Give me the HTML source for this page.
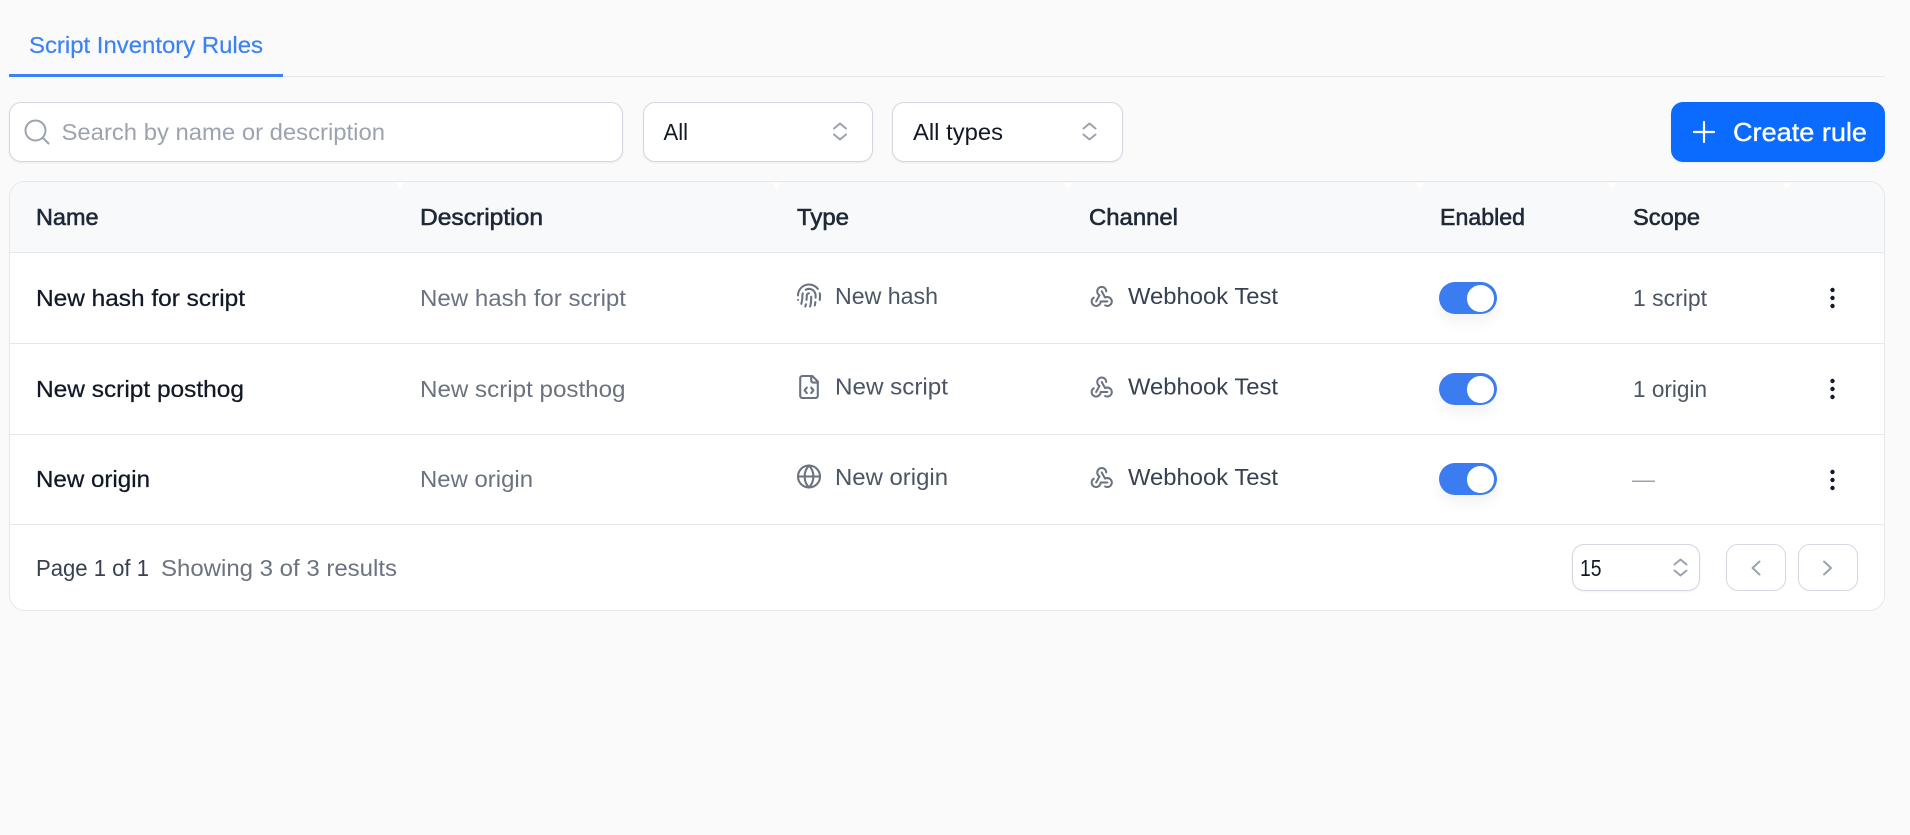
<!DOCTYPE html>
<html lang="en">
<head>
<meta charset="utf-8">
<title>Script Inventory Rules</title>
<style>
html,body{margin:0;padding:0;width:1910px;height:835px;overflow:hidden;background:#fafafa;}
.b{position:absolute;box-sizing:border-box;}
.ctl{background:#fff;border:1px solid #d5d7e0;border-radius:12px;box-shadow:0 1px 2px rgba(0,0,0,.06);}
.line{position:absolute;height:1px;background:#e5e7eb;}
svg{position:absolute;left:0;top:0;}
text{font-family:"Liberation Sans",sans-serif;font-size:23px;}
.h{fill:#1f2937;stroke:#1f2937;stroke-width:.6px;}
.n{fill:#111827;stroke:#111827;stroke-width:.25px;}
.d{fill:#6b7280;}
.t{fill:#4b5563;}
.c{fill:#374151;}
.i{fill:none;stroke:#6b7280;stroke-width:1.9;stroke-linecap:round;stroke-linejoin:round;}
.w{fill:none;stroke:#6b7280;stroke-width:1.8;stroke-linecap:round;stroke-linejoin:round;}
.g{fill:none;stroke:#9ca3af;stroke-width:2;stroke-linecap:round;stroke-linejoin:round;}
</style>
</head>
<body>
<div class="line" style="left:283px;top:76px;width:1602px;"></div>
<div class="b" style="left:9px;top:74px;width:274px;height:3px;background:#3b82f6;"></div>

<div class="b ctl" style="left:9px;top:102px;width:614px;height:60px;"></div>
<div class="b ctl" style="left:643px;top:102px;width:230px;height:60px;"></div>
<div class="b ctl" style="left:892px;top:102px;width:231px;height:60px;"></div>
<div class="b" style="left:1671px;top:102px;width:214px;height:60px;background:#0b6bff;border-radius:12px;box-shadow:0 1px 3px rgba(0,0,0,.06);"></div>

<div class="b" style="left:9px;top:181px;width:1876px;height:430px;background:#fff;border:1px solid #e5e7eb;border-radius:16px;overflow:hidden;">
  <div class="b" style="left:0;top:0;width:100%;height:71px;background:#f8f9fb;border-bottom:1px solid #e5e7eb;"></div>
  <div class="line" style="left:0;top:161px;width:100%;"></div>
  <div class="line" style="left:0;top:252px;width:100%;"></div>
  <div class="line" style="left:0;top:342px;width:100%;"></div>
</div>

<div class="b ctl" style="left:1572px;top:544px;width:128px;height:47px;"></div>
<div class="b" style="left:1726px;top:544px;width:60px;height:47px;border:1px solid #d5d7e0;border-radius:12px;background:#fff;"></div>
<div class="b" style="left:1798px;top:544px;width:60px;height:47px;border:1px solid #d5d7e0;border-radius:12px;background:#fff;"></div>

<div class="b" style="left:1439px;top:282px;width:58px;height:32px;border-radius:16px;background:#3b7cf0;box-shadow:0 8px 14px rgba(0,0,0,.05);"></div>
<div class="b" style="left:1439px;top:373px;width:58px;height:32px;border-radius:16px;background:#3b7cf0;box-shadow:0 8px 14px rgba(0,0,0,.05);"></div>
<div class="b" style="left:1439px;top:463px;width:58px;height:32px;border-radius:16px;background:#3b7cf0;box-shadow:0 8px 14px rgba(0,0,0,.05);"></div>
<div class="b" style="left:1467px;top:285px;width:27px;height:26.500px;border-radius:50%;background:#fff;"></div>
<div class="b" style="left:1467px;top:376px;width:27px;height:26.500px;border-radius:50%;background:#fff;"></div>
<div class="b" style="left:1467px;top:466px;width:27px;height:26.500px;border-radius:50%;background:#fff;"></div>

<svg width="1910" height="835" viewBox="0 0 1910 835" xmlns="http://www.w3.org/2000/svg">
  <!-- header notches -->
  <g fill="#ffffff">
    <polygon points="396,183 404,183 400,189"/>
    <polygon points="773,183 781,183 777,189"/>
    <polygon points="1064,183 1072,183 1068,189"/>
    <polygon points="1416,183 1424,183 1420,189"/>
    <polygon points="1608,183 1616,183 1612,189"/>
    <polygon points="1783,183 1791,183 1787,189"/>
  </g>

  <text x="29" y="53" textLength="234" lengthAdjust="spacingAndGlyphs" fill="#3b82f6" stroke="#3b82f6" stroke-width=".2">Script Inventory Rules</text>

  <!-- search -->
  <circle cx="35.500" cy="130.500" r="10" class="g"/>
  <path d="M43 138 48.500 143.500" class="g"/>
  <text x="61.500" y="140" textLength="323.500" lengthAdjust="spacingAndGlyphs" fill="#9ca3af">Search by name or description</text>

  <!-- selects -->
  <text x="663.500" y="140" textLength="24.500" lengthAdjust="spacingAndGlyphs" fill="#111827">All</text>
  <path d="M834 128.500 840 123.500 846 128.500M834 134.500 840 139.500 846 134.500" class="g"/>
  <text x="913" y="140" textLength="90" lengthAdjust="spacingAndGlyphs" fill="#111827">All types</text>
  <path d="M1083.500 128.500 1089.500 123.500 1095.500 128.500M1083.500 134.500 1089.500 139.500 1095.500 134.500" class="g"/>

  <!-- create -->
  <path d="M1694 132H1714M1704 122V142" fill="none" stroke="#fff" stroke-width="2.200" stroke-linecap="round"/>
  <text x="1733" y="141" textLength="134" lengthAdjust="spacingAndGlyphs" fill="#fff" stroke="#fff" stroke-width=".35" style="font-size:26px">Create rule</text>

  <!-- table header -->
  <text class="h" x="36" y="225" textLength="62.500" lengthAdjust="spacingAndGlyphs">Name</text>
  <text class="h" x="420" y="225" textLength="123" lengthAdjust="spacingAndGlyphs">Description</text>
  <text class="h" x="797" y="225" textLength="52" lengthAdjust="spacingAndGlyphs">Type</text>
  <text class="h" x="1089" y="225" textLength="89" lengthAdjust="spacingAndGlyphs">Channel</text>
  <text class="h" x="1440" y="225" textLength="85" lengthAdjust="spacingAndGlyphs">Enabled</text>
  <text class="h" x="1633" y="225" textLength="67" lengthAdjust="spacingAndGlyphs">Scope</text>

  <!-- names -->
  <text class="n" x="36" y="306" textLength="209" lengthAdjust="spacingAndGlyphs">New hash for script</text>
  <text class="n" x="36" y="397" textLength="208" lengthAdjust="spacingAndGlyphs">New script posthog</text>
  <text class="n" x="36" y="487" textLength="114" lengthAdjust="spacingAndGlyphs">New origin</text>

  <!-- descriptions -->
  <text class="d" x="420" y="306" textLength="206" lengthAdjust="spacingAndGlyphs">New hash for script</text>
  <text class="d" x="420" y="397" textLength="205.500" lengthAdjust="spacingAndGlyphs">New script posthog</text>
  <text class="d" x="420" y="487" textLength="113" lengthAdjust="spacingAndGlyphs">New origin</text>

  <!-- types -->
  <g class="i" transform="translate(795.800 282.300) scale(1.100)">
    <path d="M12 10a2 2 0 0 0-2 2c0 1.020-.1 2.510-.26 4"/>
    <path d="M14 13.120c0 2.380 0 6.380-1 8.880"/>
    <path d="M17.290 21.020c.12-.6.43-2.300.5-3.020"/>
    <path d="M2 12a10 10 0 0 1 18-6"/>
    <path d="M2 16h.01"/>
    <path d="M21.800 16c.2-2 .131-5.354 0-6"/>
    <path d="M5 19.500C5.500 18 6 15 6 12a6 6 0 0 1 .34-2"/>
    <path d="M8.650 22c.21-.66.45-1.320.57-2"/>
    <path d="M9 6.800a6 6 0 0 1 9 5.200v2"/>
  </g>
  <text class="t" x="835" y="304" textLength="103" lengthAdjust="spacingAndGlyphs">New hash</text>

  <g class="i" transform="translate(795.800 373.800) scale(1.100)">
    <path d="M10 12.500 8 15l2 2.500"/>
    <path d="m14 12.500 2 2.500-2 2.500"/>
    <path d="M14 2v4a2 2 0 0 0 2 2h4"/>
    <path d="M15 2H6a2 2 0 0 0-2 2v16a2 2 0 0 0 2 2h12a2 2 0 0 0 2-2V7z"/>
  </g>
  <text class="t" x="835" y="394.500" textLength="113" lengthAdjust="spacingAndGlyphs">New script</text>

  <g class="i" transform="translate(795.800 463.300) scale(1.100)">
    <circle cx="12" cy="12" r="10"/>
    <path d="M12 2a14.500 14.500 0 0 0 0 20 14.500 14.500 0 0 0 0-20"/>
    <path d="M2 12h20"/>
  </g>
  <text class="t" x="835" y="485" textLength="113" lengthAdjust="spacingAndGlyphs">New origin</text>

  <!-- channels -->
  <g class="w" transform="translate(1088.300 282.400) scale(1.120)">
    <path d="M4.876 13.610a4 4 0 1 0 6.124 3.390h6"/>
    <path d="M15.066 20.502a4 4 0 1 0 1.934-7.502c-.706 0-1.424.179-2 .5l-3-5.500"/>
    <path d="M16 8a4 4 0 1 0-8 0c0 1.506.77 2.818 2 3.500l-3 5.500"/>
  </g>
  <text class="c" x="1128" y="304" textLength="150" lengthAdjust="spacingAndGlyphs">Webhook Test</text>
  <g class="w" transform="translate(1088.300 373) scale(1.120)">
    <path d="M4.876 13.610a4 4 0 1 0 6.124 3.390h6"/>
    <path d="M15.066 20.502a4 4 0 1 0 1.934-7.502c-.706 0-1.424.179-2 .5l-3-5.500"/>
    <path d="M16 8a4 4 0 1 0-8 0c0 1.506.77 2.818 2 3.500l-3 5.500"/>
  </g>
  <text class="c" x="1128" y="394.500" textLength="150" lengthAdjust="spacingAndGlyphs">Webhook Test</text>
  <g class="w" transform="translate(1088.300 463.500) scale(1.120)">
    <path d="M4.876 13.610a4 4 0 1 0 6.124 3.390h6"/>
    <path d="M15.066 20.502a4 4 0 1 0 1.934-7.502c-.706 0-1.424.179-2 .5l-3-5.500"/>
    <path d="M16 8a4 4 0 1 0-8 0c0 1.506.77 2.818 2 3.500l-3 5.500"/>
  </g>
  <text class="c" x="1128" y="485" textLength="150" lengthAdjust="spacingAndGlyphs">Webhook Test</text>

  <!-- scope -->
  <text class="t" x="1633" y="306" textLength="74" lengthAdjust="spacingAndGlyphs">1 script</text>
  <text class="t" x="1633" y="397" textLength="74" lengthAdjust="spacingAndGlyphs">1 origin</text>
  <text x="1632" y="487" textLength="23" lengthAdjust="spacingAndGlyphs" fill="#9ca3af">—</text>

  <!-- kebabs -->
  <g fill="#111827">
    <circle cx="1832.500" cy="290" r="2.200"/><circle cx="1832.500" cy="298" r="2.200"/><circle cx="1832.500" cy="306" r="2.200"/>
    <circle cx="1832.500" cy="381" r="2.200"/><circle cx="1832.500" cy="389" r="2.200"/><circle cx="1832.500" cy="397" r="2.200"/>
    <circle cx="1832.500" cy="472" r="2.200"/><circle cx="1832.500" cy="480" r="2.200"/><circle cx="1832.500" cy="488" r="2.200"/>
  </g>

  <!-- footer -->
  <text class="c" x="36" y="576" textLength="113" lengthAdjust="spacingAndGlyphs">Page 1 of 1</text>
  <text class="d" x="161" y="576" textLength="236" lengthAdjust="spacingAndGlyphs">Showing 3 of 3 results</text>
  <text x="1580" y="576" textLength="21.500" lengthAdjust="spacingAndGlyphs" fill="#111827">15</text>
  <path d="M1674.500 564.500 1680.500 559.500 1686.500 564.500M1674.500 570.500 1680.500 575.500 1686.500 570.500" class="g"/>
  <path d="M1759.500 561.500 1752.500 568 1759.500 574.500" class="g"/>
  <path d="M1824 561.500 1831 568 1824 574.500" class="g"/>
</svg>
</body>
</html>
